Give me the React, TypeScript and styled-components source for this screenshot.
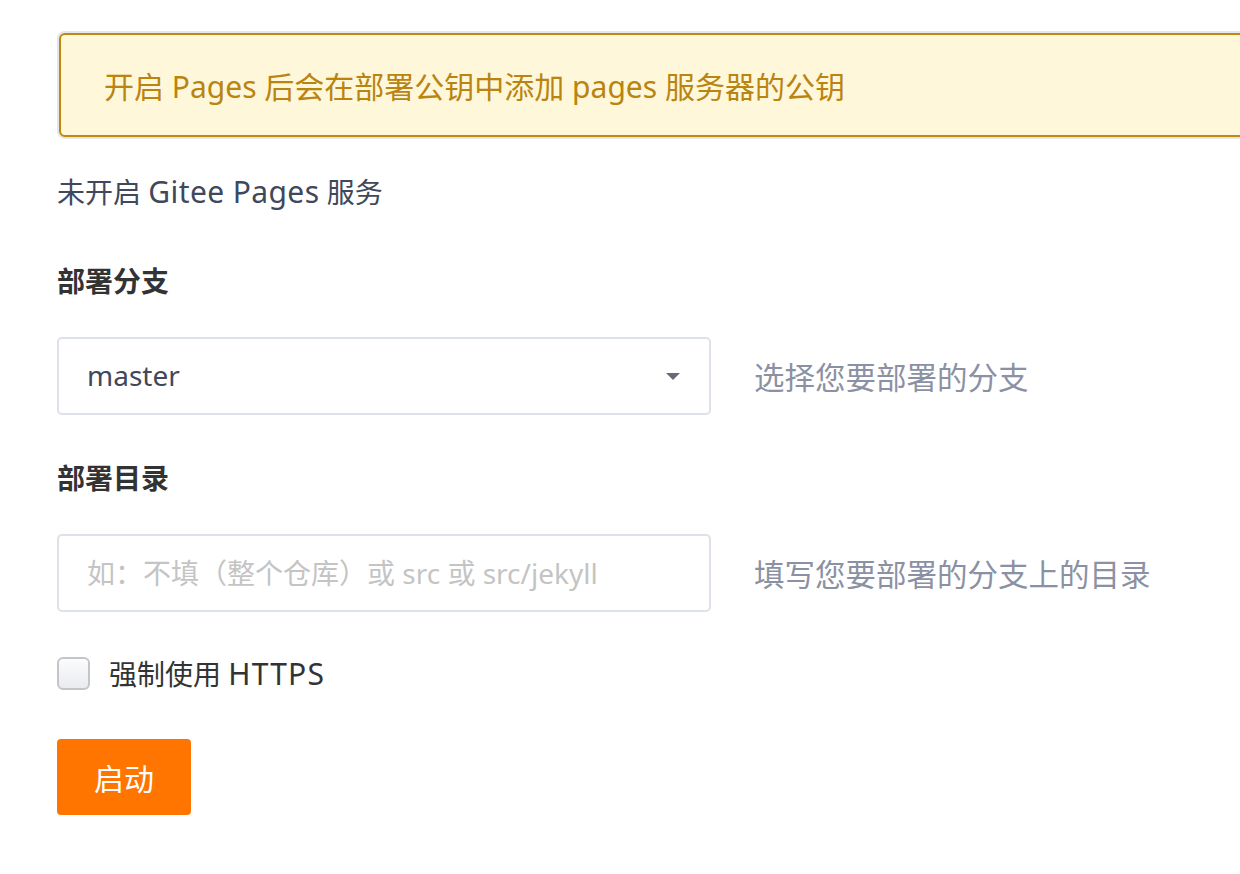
import React, { useState } from 'react';
import styled, { createGlobalStyle } from 'styled-components';

const GlobalStyle = createGlobalStyle`
  html, body {
    margin: 0;
    padding: 0;
    background: #fff;
    overflow-x: hidden;
  }
  body {
    font-family: "Noto Sans", "Noto Sans CJK SC", sans-serif;
  }
`;

const Page = styled.div`
  padding: 33px 0 40px 57px;
  width: 1240px;
  box-sizing: border-box;
`;

const Notice = styled.div`
  margin-left: 2px;
  width: 1240px;
  height: 104px;
  box-sizing: border-box;
  display: flex;
  align-items: center;
  padding: 0 43px;
  background: #fff7d9;
  border: 2px solid #c2870f;
  border-radius: 6px;
  box-shadow: 0 0 0 2px #e3e6eb;
  color: #b98410;
  font-size: 30px;
`;

const Status = styled.div`
  margin-top: 35px;
  font-size: 28px;
  line-height: 40px;
  color: #40485b;
`;

// latin words render a bit wider in the original font
const Latin = styled.span<{ $spacing: number }>`
  font-size: 30px;
  letter-spacing: ${p => p.$spacing}px;
`;

const Label = styled.div<{ $top: number }>`
  margin-top: ${p => p.$top}px;
  font-size: 28px;
  line-height: 40px;
  font-weight: 700;
  color: #333;
`;

const FieldRow = styled.div`
  margin-top: 36px;
  display: flex;
  align-items: center;
  gap: 43px;
`;

const Box = styled.div`
  position: relative;
  width: 654px;
  height: 78px;
  box-sizing: border-box;
  border: 2px solid #dde2e8;
  border-radius: 5px;
  display: flex;
  align-items: center;
  padding: 0 28px;
  background: #fff;
`;

const SelectValue = styled.span`
  flex: 1;
  font-size: 28px;
  color: #40485b;
  margin-top: -3px;
`;

const Caret = styled.span`
  width: 0;
  height: 0;
  border-left: 7px solid transparent;
  border-right: 7px solid transparent;
  border-top: 7px solid #676b78;
  margin-right: 1px;
`;

const Input = styled.input`
  flex: 1;
  border: none;
  outline: none;
  padding: 0;
  font-family: inherit;
  font-size: 28px;
  color: #40485b;
  background: transparent;
  &::placeholder {
    color: #c4c4c4;
  }
`;

const Hint = styled.span`
  font-size: 30.5px;
  color: #8b91a3;
`;

const CheckRow = styled.label`
  margin-top: 41px;
  display: flex;
  align-items: center;
  gap: 19px;
  height: 40px;
  cursor: pointer;
`;

const CheckBox = styled.span<{ $on: boolean }>`
  width: 33px;
  height: 33px;
  box-sizing: border-box;
  border: 2px solid #c3c5c9;
  border-radius: 6px;
  background: ${p => (p.$on ? '#ff7500' : 'linear-gradient(#fcfcfd, #e9ebef)')};
`;

const CheckText = styled.span`
  font-size: 28px;
  color: #333;
`;

const Button = styled.button`
  margin-top: 46px;
  width: 134px;
  height: 76px;
  border: none;
  border-radius: 4px;
  background: #ff7500;
  color: #fff;
  font-family: inherit;
  font-size: 30px;
  cursor: pointer;
`;

export default function App() {
  const [https, setHttps] = useState(false);
  const [dir, setDir] = useState('');

  return (
    <>
      <GlobalStyle />
      <Page>
        <Notice>开启 Pages 后会在部署公钥中添加 pages 服务器的公钥</Notice>
        <Status>
          未开启 <Latin $spacing={0.4}>Gitee Pages</Latin> 服务
        </Status>

        <Label $top={49}>部署分支</Label>
        <FieldRow>
          <Box>
            <SelectValue>master</SelectValue>
            <Caret />
          </Box>
          <Hint>选择您要部署的分支</Hint>
        </FieldRow>

        <Label $top={43}>部署目录</Label>
        <FieldRow>
          <Box>
            <Input
              value={dir}
              onChange={e => setDir(e.target.value)}
              placeholder="如：不填（整个仓库）或 src 或 src/jekyll"
            />
          </Box>
          <Hint>填写您要部署的分支上的目录</Hint>
        </FieldRow>

        <CheckRow onClick={() => setHttps(!https)}>
          <CheckBox $on={https} />
          <CheckText>
            强制使用 <Latin $spacing={1.2}>HTTPS</Latin>
          </CheckText>
        </CheckRow>

        <Button type="button">启动</Button>
      </Page>
    </>
  );
}
